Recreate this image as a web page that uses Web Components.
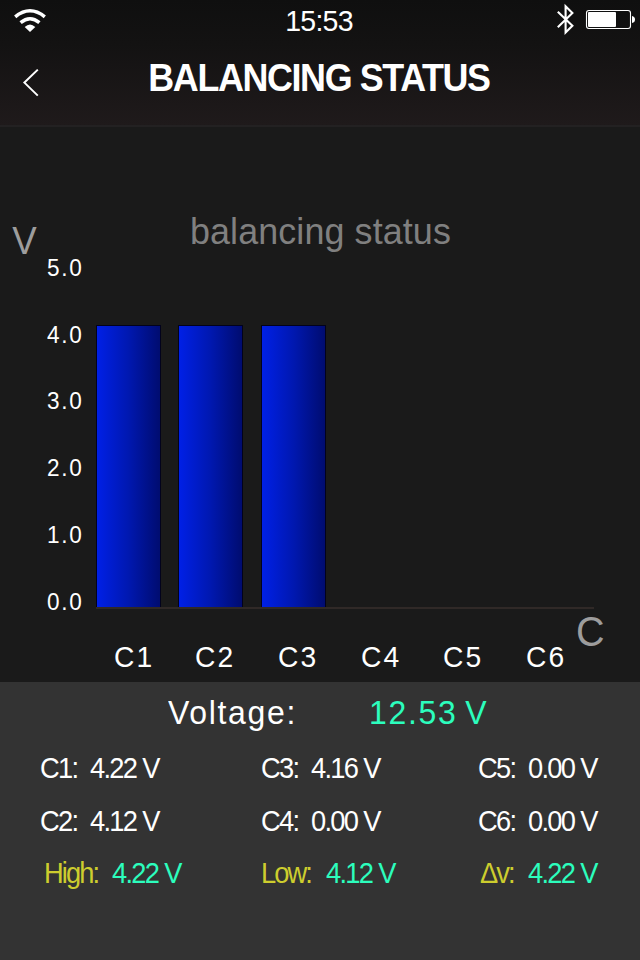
<!DOCTYPE html>
<html lang="en">
<head>
<meta charset="utf-8">
<title>Balancing Status</title>
<style>
  body {
    margin: 0;
    width: 640px;
    height: 960px;
    overflow: hidden;
    background: #1a1a1a;
    color: #fff;
    font-family: "Liberation Sans", Arial, sans-serif;
  }
</style>
</head>
<body>
<balance-screen>
  <app-header slot="header" time="15:53">BALANCING STATUS</app-header>
  <bar-chart slot="chart" values="4.22,4.22,4.22,0,0,0" labels="C1,C2,C3,C4,C5,C6">balancing status</bar-chart>
  <voltage-panel slot="panel" total="12.53 V">
    <cell-reading label="C1:">4.22 V</cell-reading>
    <cell-reading label="C3:">4.16 V</cell-reading>
    <cell-reading label="C5:">0.00 V</cell-reading>
    <cell-reading label="C2:">4.12 V</cell-reading>
    <cell-reading label="C4:">0.00 V</cell-reading>
    <cell-reading label="C6:">0.00 V</cell-reading>
    <cell-reading accent label="High:" style="--indent: 3.5px; --label: 68px">4.22 V</cell-reading>
    <cell-reading accent label="Low:" style="--label: 64.5px">4.12 V</cell-reading>
    <cell-reading accent label="Δv:" style="--indent: 2px; --label: 47.5px">4.22 V</cell-reading>
  </voltage-panel>
</balance-screen>

<script>
// Full-height screen: header, chart, readings
class BalanceScreen extends HTMLElement {
  connectedCallback() {
    this.attachShadow({ mode: 'open' }).innerHTML = `
      <style>
        :host { display: grid; grid-template-rows: 127px 555px 278px; width: 640px; height: 960px; }
      </style>
      <slot name="header"></slot>
      <slot name="chart"></slot>
      <slot name="panel"></slot>
    `;
  }
}
customElements.define('balance-screen', BalanceScreen);

class AppHeader extends HTMLElement {
  connectedCallback() {
    this.attachShadow({ mode: 'open' }).innerHTML = `
      <style>
        :host {
          display: block;
          box-sizing: border-box;
          border-bottom: 2px solid #232122;
          background: linear-gradient(#0f0f0f, #131212 35%, #1f1a1b);
        }
        .status, .nav { display: grid; grid-template-columns: 120px 1fr 120px; }
        .status { height: 41px; }
        .nav { height: 84px; }
        svg { display: block; fill: none; stroke: #fff; }
        .time {
          text-align: center;
          font-size: 30px;
          line-height: 41px;
          letter-spacing: -0.8px;
          transform: scaleX(0.95);
          margin: 0 1px 0 -1px;
        }
        h1 {
          margin: 0 1px 0 -1px;
          padding-top: 15px;
          text-align: center;
          white-space: nowrap;
          font-size: 39px;
          line-height: 44px;
          letter-spacing: -1.5px;
          transform: scaleX(0.92);
        }
      </style>
      <div class="status">
        <svg width="120" height="41" viewBox="0 0 120 41" aria-label="Wi-Fi">
          <path d="M15.2 16.8Q30 4.8 44.8 16.8" stroke-width="3.5"/>
          <path d="M20.6 22.7Q30 14.7 39.4 22.7" stroke-width="3.5"/>
          <path d="M24.7 27Q30 22 35.3 27L30 32Z" fill="#fff" stroke="none"/>
        </svg>
        <div class="time">${this.getAttribute('time')}</div>
        <svg width="120" height="41" viewBox="520 0 120 41" aria-label="Bluetooth, battery">
          <path d="M557.8 11.8L572.4 25.8L565.6 32.4V6.2L572.4 12.9L557.8 27.2" stroke-width="2.1"/>
          <rect x="586.5" y="10.5" width="44" height="18" rx="2.5" stroke-width="1.1"/>
          <rect x="588" y="12" width="28" height="15" rx="1" fill="#fff" stroke="none"/>
          <path d="M632 16Q635 16.5 635 19.5T632 23Z" fill="#fff" stroke="none"/>
        </svg>
      </div>
      <div class="nav">
        <svg width="120" height="84" viewBox="0 41 120 84" aria-label="Back">
          <path d="M37.8 69.6L24.4 82.6L37.8 95.6" stroke-width="2"/>
        </svg>
        <h1><slot></slot></h1>
      </div>
    `;
  }
}
customElements.define('app-header', AppHeader);

class BarChart extends HTMLElement {
  connectedCallback() {
    const values = this.getAttribute('values').split(',').map(Number);
    const labels = this.getAttribute('labels').split(',');
    const ticks = [5, 4, 3, 2, 1, 0];

    const bars = values.map(v => `<div class="slot">${v > 0 ? `<div class="bar" style="height: ${v * 66.8}px"></div>` : ''}</div>`).join('');

    this.attachShadow({ mode: 'open' }).innerHTML = `
      <style>
        :host { display: grid; grid-template-columns: 46px 50px 544px; background: #1a1a1a; }
        .unit, .ticks div, .labels div, .name { transform: scaleX(0.94); transform-origin: left; }
        .unit { padding: 92px 0 0 13px; font-size: 39px; line-height: 44px; color: #9d9d9d; }
        .ticks { padding: 107.8px 0 0 1px; font-size: 24px; letter-spacing: 1.8px; }
        .ticks div { line-height: 66.8px; }
        .plot { display: grid; grid-template-rows: 198px 282px 2px 1fr; }
        h2 {
          margin: 0;
          padding: 83px 0 0 94px;
          font-size: 37px;
          font-weight: normal;
          line-height: 44px;
          letter-spacing: 0.1px;
          color: #808080;
          transform: scaleX(0.97);
          transform-origin: 94px;
        }
        .bars { display: grid; grid-template-columns: repeat(6, 82.4px); align-items: end; }
        .bar {
          box-sizing: border-box;
          width: 65px;
          border: 1px solid #02021c;
          border-bottom: 0;
          background: linear-gradient(90deg, #0020e6, #0018b0 50%, #000c70);
        }
        .axis { width: 498px; background: #302927; }
        .below { display: flex; }
        .labels {
          display: grid;
          grid-template-columns: 81px 83px 83px 82px 83px 50px;
          width: 462px;
          padding: 29.5px 0 0 17.5px;
          font-size: 30px;
          line-height: 36px;
          letter-spacing: 2.4px;
        }
        .name { font-size: 42px; line-height: 46px; color: #9d9d9d; }
      </style>
      <div class="unit">V</div>
      <div class="ticks">${ticks.map(t => `<div>${t.toFixed(1)}</div>`).join('')}</div>
      <div class="plot">
        <h2><slot></slot></h2>
        <div class="bars">${bars}</div>
        <div class="axis"></div>
        <div class="below">
          <div class="labels">${labels.map(l => `<div>${l}</div>`).join('')}</div>
          <div class="name">C</div>
        </div>
      </div>
    `;
  }
}
customElements.define('bar-chart', BarChart);

class VoltagePanel extends HTMLElement {
  connectedCallback() {
    this.attachShadow({ mode: 'open' }).innerHTML = `
      <style>
        :host { display: block; box-sizing: border-box; padding-top: 8px; background: #333; }
        .total {
          display: grid;
          grid-template-columns: 201px 1fr;
          height: 52px;
          padding-left: 168px;
          font-size: 34px;
          line-height: 44px;
          letter-spacing: 1.8px;
        }
        .total span { transform: scaleX(0.94); transform-origin: left; }
        .total span:last-child { color: #2cfdbd; word-spacing: -3px; }
        .cells { display: grid; grid-template-columns: 221px 217px 1fr; padding-left: 40px; }
      </style>
      <div class="total"><span>Voltage:</span><span>${this.getAttribute('total')}</span></div>
      <div class="cells"><slot></slot></div>
    `;
  }
}
customElements.define('voltage-panel', VoltagePanel);

class CellReading extends HTMLElement {
  connectedCallback() {
    this.attachShadow({ mode: 'open' }).innerHTML = `
      <style>
        :host {
          display: flex;
          padding-left: var(--indent, 0);
          font-size: 29px;
          line-height: 52.7px;
          letter-spacing: -1.8px;
          white-space: nowrap;
        }
        span { transform: scaleX(0.94); transform-origin: left; }
        .label { width: var(--label, 50px); }
        :host([accent]) .label { color: #cdcd2e; letter-spacing: -2px; }
        :host([accent]) .value { color: #2cfdbd; }
      </style>
      <span class="label">${this.getAttribute('label')}</span>
      <span class="value"><slot></slot></span>
    `;
  }
}
customElements.define('cell-reading', CellReading);
</script>
</body>
</html>
